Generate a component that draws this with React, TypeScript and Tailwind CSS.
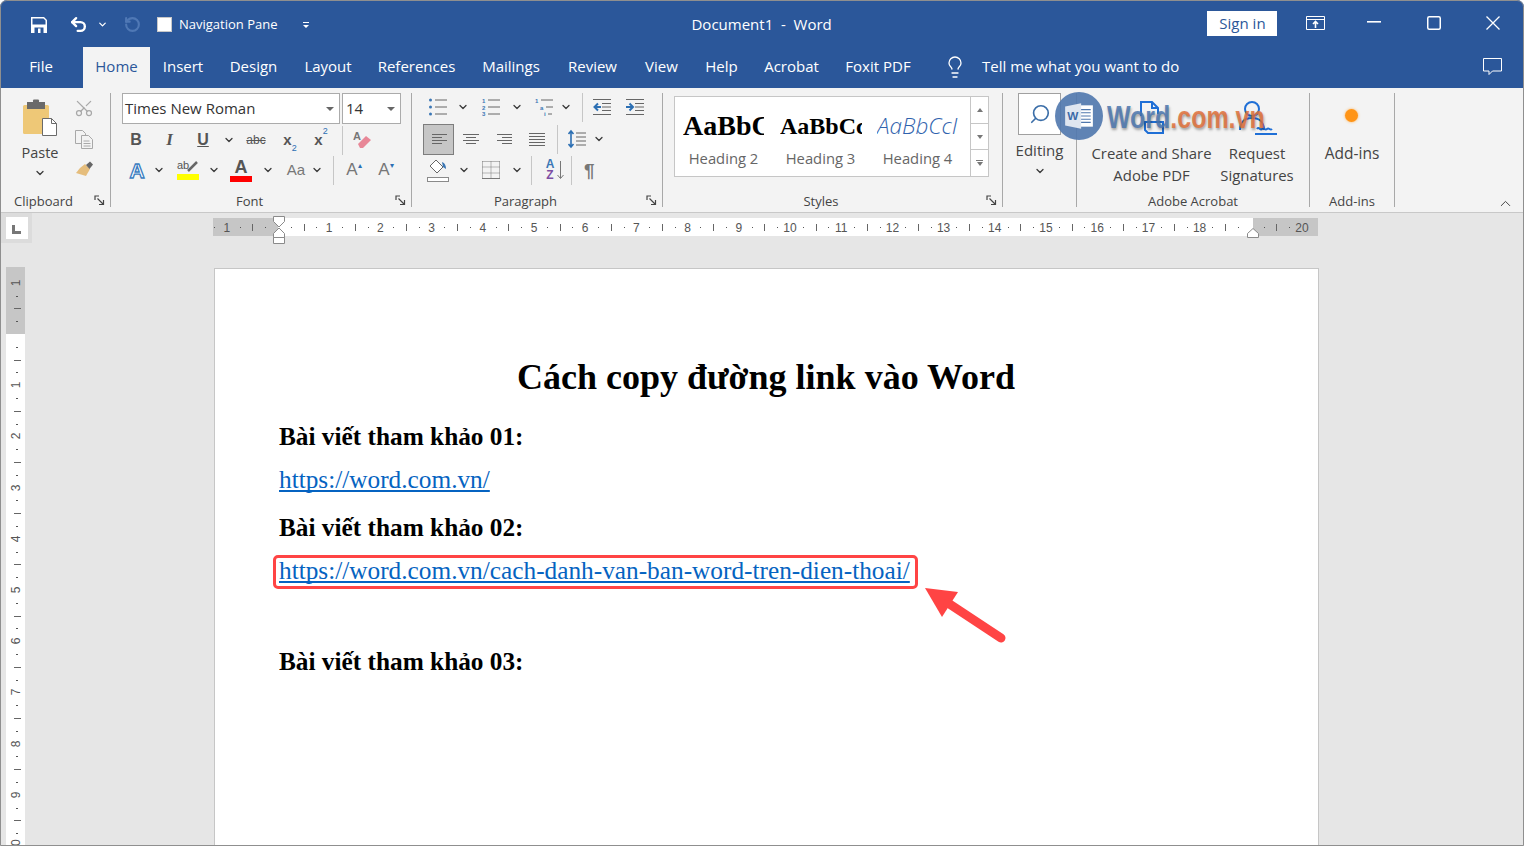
import { ChevronDown, ChevronUp, Lightbulb, Search, Scissors, Undo2, RotateCcw } from "lucide-react";

const SANS = "font-['Open_Sans','Noto_Sans',sans-serif]";
const SERIF = "font-['Liberation_Serif',serif]";
const ARIAL = "font-['Liberation_Sans',sans-serif]";

const TABS = [
  { label: "Insert", width: 66 },
  { label: "Design", width: 75 },
  { label: "Layout", width: 74 },
  { label: "References", width: 103 },
  { label: "Mailings", width: 86 },
  { label: "Review", width: 77 },
  { label: "View", width: 61 },
  { label: "Help", width: 59 },
  { label: "Acrobat", width: 81 },
  { label: "Foxit PDF", width: 92 },
];

function Launcher() {
  return (
    <svg width="11" height="11" viewBox="0 0 11 11" className="absolute right-[5px] bottom-[1px] text-[#444]" fill="none" stroke="currentColor">
      <path d="M1 5V1h4M3.5 3.500L9.500 9.500M9.500 5v4.500H5" strokeWidth="1.200" />
    </svg>
  );
}

function Caret({ className = "" }: { className?: string }) {
  return <ChevronDown size={12} strokeWidth={2.6} className={`shrink-0 text-[#3a3a3a] ${className}`} />;
}

function Sep({ className = "" }: { className?: string }) {
  return <div className={`h-[29px] w-px shrink-0 bg-[#c6c6c6] ${className}`} />;
}

function Group({ label, width, children, launcher }: { label: string; width: number; children: React.ReactNode; launcher?: boolean }) {
  return (
    <div className="relative h-[114px] shrink-0 border-r border-[#a8a8a8]" style={{ width }}>
      <div className="h-[99px]">{children}</div>
      <div className={`text-center text-[13px] leading-[18px] text-[#444] ${launcher ? "pr-[23px]" : ""}`}>{label}</div>
      {launcher && <Launcher />}
    </div>
  );
}

function Lines({ kind }: { kind: "left" | "center" | "right" | "justify" }) {
  const rows = kind === "justify" ? ["M0 1.500h16", "M0 4.500h16", "M0 7.500h16", "M0 10.500h16", "M0 13.500h16"] :
    kind === "left" ? ["M1 2.500h15", "M1 5.500h10", "M1 8.500h15", "M1 11.500h10"] :
    kind === "center" ? ["M0 2.500h16", "M3 5.500h10", "M0 8.500h16", "M3 11.500h10"] :
    ["M1 2.500h15", "M6 5.500h10", "M1 8.500h15", "M6 11.500h10"];
  return (
    <svg width="16" height="15" viewBox="0 0 16 15" stroke="#666" fill="none" className="shrink-0">
      {rows.map((d) => <path key={d} d={d} />)}
    </svg>
  );
}

function ClipboardIcon() {
  return (
    <svg width="36" height="40" viewBox="0 0 36 40">
      <rect x="1" y="6" width="26" height="29" rx="1.500" fill="#eec877" />
      <rect x="5" y="3" width="18" height="7" fill="#6a6a6a" />
      <rect x="11" y="0.500" width="6" height="5" rx="1" fill="#6a6a6a" />
      <path d="M20.500 19.500h9l5 5v12h-14z" fill="#fff" stroke="#6a6a6a" />
      <path d="M29.500 19.500v5h5" fill="none" stroke="#6a6a6a" />
    </svg>
  );
}

function ListIcon({ kind }: { kind: "bullet" | "number" | "multi" }) {
  return (
    <svg width="18" height="18" viewBox="0 0 18 18" fill="none" className="shrink-0">
      {kind === "bullet" && (
        <>
          <circle cx="1.500" cy="2" r="1.500" fill="#3b77b5" />
          <circle cx="1.500" cy="9" r="1.500" fill="#3b77b5" />
          <circle cx="1.500" cy="16" r="1.500" fill="#3b77b5" />
        </>
      )}
      {kind === "number" && (
        <g fontSize="6" fontWeight="700" fill="#3b77b5" fontFamily="Liberation Sans">
          <text x="0" y="4.500">1</text>
          <text x="0" y="11.500">2</text>
          <text x="0" y="18">3</text>
        </g>
      )}
      {kind === "multi" && (
        <g fontSize="6" fontWeight="700" fill="#3b77b5" fontFamily="Liberation Sans">
          <text x="0" y="4.500">1</text>
          <text x="5" y="11.500">a</text>
          <text x="9" y="18">i</text>
        </g>
      )}
      <path d={kind === "multi" ? "M6 2h12M11 9h7M13 16h4" : "M6 2h12M6 9h12M6 16h12"} stroke="#666" />
    </svg>
  );
}

function IndentIcon({ dir }: { dir: "in" | "out" }) {
  return (
    <svg width="18" height="18" viewBox="0 0 18 18" fill="none" className="shrink-0">
      <path d="M0 1.500h18M9 5.500h9M9 9h9M9 12.500h9M0 16.500h18" stroke="#666" />
      <path d={dir === "out" ? "M8 9H2M5 5.500L1.500 9 5 12.500" : "M0 9h6M3.500 5.500L7 9l-3.500 3.500"} stroke="#2c6fb3" strokeWidth="2" />
    </svg>
  );
}

// horizontal ruler: 0 sits at x=278 on the page, one unit is 51.2px
function HRuler() {
  const marks = [];
  for (let i = -1; i <= 20; i++) {
    const x = 65 + i * 51.2;
    if (i !== 0 && i !== 19) {
      marks.push(
        <span key={`n${i}`} className={`absolute top-0 w-6 -translate-x-1/2 text-center ${ARIAL} text-[12px] leading-[20px] text-[#555]`} style={{ left: x }}>
          {Math.abs(i)}
        </span>
      );
    }
    if (i < 20) {
      [12.8, 38.4].forEach((d) => {
        const lx = x + d;
        if (lx > 0 && lx < 1105) marks.push(<span key={`d${i}${d}`} className="absolute top-[9px] h-[1px] w-[1px] bg-[#555]" style={{ left: lx }} />);
      });
      const tx = x + 25.6;
      if (tx > 0 && tx < 1105) marks.push(<span key={`t${i}`} className="absolute top-[6px] h-[7px] w-[1px] bg-[#666]" style={{ left: tx }} />);
    }
    if (i === -1) marks.push(<span key="edge" className="absolute left-[1px] top-[9px] h-[1px] w-[1px] bg-[#555]" />);
  }
  return (
    <div className="relative h-[18px] w-[1105px] overflow-hidden bg-white">
      <div className="absolute left-0 top-0 h-full w-[65px] bg-[#c6c6c6]" />
      <div className="absolute right-0 top-0 h-full w-[65px] bg-[#c6c6c6]" />
      {marks}
    </div>
  );
}

// vertical ruler: 0 sits at y=334, same unit
function VRuler() {
  const marks = [];
  for (let i = -1; i <= 10; i++) {
    const y = 67 + i * 51.2;
    if (i !== 0) {
      marks.push(
        <span key={`n${i}`} className={`absolute left-0 h-4 w-[19px] -translate-y-1/2 -rotate-90 text-center ${ARIAL} text-[12px] leading-[16px] text-[#555]`} style={{ top: y }}>
          {Math.abs(i)}
        </span>
      );
    }
    [12.8, 38.4].forEach((d) => {
      const ly = y + d;
      if (ly > 0) marks.push(<span key={`d${i}${d}`} className="absolute left-[10px] h-[1px] w-[2px] bg-[#555]" style={{ top: ly }} />);
    });
    const ty = y + 25.6;
    if (ty > 0) marks.push(<span key={`t${i}`} className="absolute left-[8px] h-[1px] w-[7px] bg-[#666]" style={{ top: ty }} />);
  }
  return (
    <div className="relative h-full w-[19px] overflow-hidden bg-white">
      <div className="absolute left-0 top-0 h-[67px] w-full bg-[#c6c6c6]" />
      {marks}
    </div>
  );
}

function Watermark() {
  return (
    <div className="pointer-events-none absolute left-[1055px] top-[92px] flex items-center">
      <div className="flex h-[48px] w-[48px] items-center justify-center rounded-full bg-[#4f77ad]/90">
        <svg width="32" height="32" viewBox="0 0 30 30">
          <rect x="13" y="5" width="15" height="20" fill="#fff" />
          <path d="M16 9h10M16 12h10M16 15h10M16 18h10M16 21h10" stroke="#4f77ad" />
          <path d="M2 6l15-3v24L2 24z" fill="#dfe6f0" />
          <text x="4" y="19" fontSize="11" fontWeight="700" fill="#3c6aa8" fontFamily="Liberation Sans">W</text>
        </svg>
      </div>
      <div className={`ml-[4px] mt-[1px] origin-left scale-x-[0.78] whitespace-nowrap ${ARIAL} text-[32px] font-bold leading-none [text-shadow:1px_2px_3px_rgba(0,0,0,0.35)]`}>
        <span className="text-[#4c76ae]/85">Word</span>
        <span className="text-[#e0703a]/85">.com.vn</span>
      </div>
    </div>
  );
}

export default function App() {
  return (
    <div className={`relative h-[846px] w-[1524px] overflow-hidden rounded-t-[7px] bg-[#e6e6e6] ${SANS}`}>
      {/* Title bar */}
      <div className="flex h-[47px] items-center bg-[#2b579a] pl-[31px] pt-[2px] text-white">
        <svg width="16" height="16" viewBox="0 0 16 16" className="shrink-0">
          <path fillRule="evenodd" fill="#fff" d="M0 0h13l3 3v13H0zM1.500 1.500v6h13v-4l-2-2zM3.500 10.500v5.500h9v-5.500z" />
          <rect x="7" y="11.500" width="2.500" height="4.500" fill="#fff" />
        </svg>
        <Undo2 size={19} strokeWidth={3} className="ml-[22px] shrink-0" />
        <ChevronDown size={11} strokeWidth={2.8} className="ml-[9px] shrink-0" />
        <RotateCcw size={17} strokeWidth={3} className="ml-[16px] shrink-0 text-[#4f78b5]" />
        <div className="ml-[16px] h-[15px] w-[15px] shrink-0 border border-[#c8c8c8] bg-white" />
        <span className="ml-[7px] text-[13px]">Navigation Pane</span>
        <svg width="8" height="8" viewBox="0 0 8 8" className="ml-[25px] shrink-0" fill="#fff"><path d="M1 1h6v1H1zM1 4h6L4 7z" /></svg>
        <div className="ml-[381px] w-[260px] whitespace-nowrap text-[15px]">Document1&nbsp; -&nbsp; Word</div>
        <div className="mb-[3px] ml-[256px] flex h-[25px] w-[70px] shrink-0 items-center justify-center bg-white text-[15px] text-[#2b579a]">Sign in</div>
        <svg width="19" height="15" viewBox="0 0 19 15" fill="none" stroke="#fff" className="mb-[3px] ml-[29px] shrink-0">
          <path d="M.500.500h18v13H.500zM.500 3.500h18" />
          <path d="M9.500 12V6M7 8l2.500-2.500L12 8" strokeWidth="1.600" />
        </svg>
        <svg width="14" height="2" viewBox="0 0 14 2" className="mb-[6px] ml-[42px] shrink-0"><rect width="14" height="1.600" fill="#fff" /></svg>
        <svg width="14" height="14" viewBox="0 0 14 14" fill="none" stroke="#fff" strokeWidth="1.500" className="mb-[3px] ml-[46px] shrink-0"><rect x=".75" y=".75" width="12.500" height="12.500" rx="1.500" /></svg>
        <svg width="14" height="14" viewBox="0 0 14 14" fill="none" stroke="#fff" strokeWidth="1.300" className="mb-[3px] ml-[45px] shrink-0"><path d="M.500.500l13 13M13.500.500l-13 13" /></svg>
      </div>

      {/* Tabs */}
      <div className="flex h-[41px] items-center bg-[#2b579a] text-[15px] text-white">
        <div className="flex h-[41px] w-[83px] items-center justify-center pb-[2px] pr-[1px]">File</div>
        <div className="flex h-[41px] w-[67px] items-center justify-center bg-[#f3f3f3] pb-[2px] text-[#2b579a]">Home</div>
        {TABS.map((t) => (
          <div key={t.label} className="flex h-[41px] items-center justify-center whitespace-nowrap pb-[2px]" style={{ width: t.width }}>{t.label}</div>
        ))}
        <Lightbulb size={24} strokeWidth={1.3} className="mb-[2px] ml-[19px] shrink-0" />
        <div className="ml-[15px] flex h-[41px] items-center pb-[2px]">Tell me what you want to do</div>
        <svg width="19" height="18" viewBox="0 0 19 18" fill="none" stroke="#fff" className="mb-[2px] ml-auto mr-[22px] shrink-0">
          <path d="M.500.500h18v12.500H9.500L6 16.500V13H.500z" />
        </svg>
      </div>

      {/* Ribbon */}
      <div className="relative flex h-[125px] items-start border-b border-[#c8c8c8] bg-[#f3f3f3] pt-[5px] text-[#444]">
        <Group label="Clipboard" width={111} launcher>
          <div className="flex">
            <div className="flex w-[70px] flex-col items-center pl-[10px]">
              <div className="mt-[6px]"><ClipboardIcon /></div>
              <div className="mt-[4px] text-[14.500px] leading-[20px]">Paste</div>
              <Caret className="mt-[4px]" />
            </div>
            <div className="ml-[4px] flex flex-col items-center gap-[12px] pt-[5px] text-[#a8a8a8]">
              <Scissors size={20} strokeWidth={1.5} className="-rotate-90" />
              <svg width="18" height="19" viewBox="0 0 18 19" fill="none" stroke="#a8a8a8">
                <path d="M.500.500h7l3 3v10H.500z" fill="#f3f3f3" />
                <path d="M6.500 5.500h7l4 4v9h-11z" fill="#f3f3f3" />
                <path d="M8.500 11h6M8.500 13.500h7M8.500 16h7" />
              </svg>
              <svg width="19" height="17" viewBox="0 0 19 17">
                <path d="M10 3L15 8 11 15 1 12 5 7z" fill="#e5bd7c" />
                <path d="M11 4l4-3.500 3 3-3.500 4.500z" fill="#666" />
              </svg>
            </div>
          </div>
        </Group>

        <Group label="Font" width={301} launcher>
          <div className="flex gap-[2px] pl-[11px]">
            <div className="flex h-[31px] w-[218px] items-center justify-between border border-[#ababab] bg-white pl-[2px] pr-[5px] text-[15px] text-[#333]">
              Times New Roman
              <span className="h-0 w-0 border-x-[4px] border-t-[4px] border-x-transparent border-t-[#666]" />
            </div>
            <div className="flex h-[31px] w-[59px] items-center justify-between border border-[#ababab] bg-white pl-[3px] pr-[5px] text-[15px] text-[#333]">
              14
              <span className="h-0 w-0 border-x-[4px] border-t-[4px] border-x-transparent border-t-[#666]" />
            </div>
          </div>
          <div className={`mt-[1px] flex h-[30px] items-center pl-[9px] ${ARIAL} text-[#555]`}>
            <span className="w-[32px] text-center text-[16px] font-bold">B</span>
            <span className={`w-[35px] text-center ${SERIF} text-[17px] font-bold italic`}>I</span>
            <span className="w-[32px] text-center text-[16px] font-bold underline">U</span>
            <span className="flex w-[20px] justify-center"><Caret /></span>
            <span className="w-[34px] text-center text-[12px] line-through">abc</span>
            <span className="w-[32px] pl-[2px] text-center text-[15px] font-bold">x<sub className="align-sub text-[9px] font-normal text-[#2c6fb3]">2</sub></span>
            <span className="w-[32px] text-center text-[15px] font-bold">x<sup className="align-super text-[9px] font-normal text-[#2c6fb3]">2</sup></span>
            <Sep className="ml-[5px]" />
            <svg width="20" height="20" viewBox="0 0 20 20" className="ml-[10px] shrink-0">
              <text x="0" y="10" fontSize="11" fontWeight="700" fill="#777" fontFamily="Liberation Sans">A</text>
              <path d="M5 14l8-8 5 4-8 8h-3z" fill="#e88797" />
            </svg>
          </div>
          <div className={`flex h-[30px] items-center pl-[13px] ${ARIAL} text-[#555]`}>
            <span className="w-[26px] text-center text-[21px] font-bold leading-none text-white [-webkit-text-stroke:1.3px_#3a7cc0]">A</span>
            <span className="flex w-[18px] justify-center"><Caret /></span>
            <div className="relative ml-[9px] flex w-[22px] flex-col items-start">
              <span className="text-[11px] leading-[11px]">ab</span>
              <svg width="12" height="12" viewBox="0 0 12 12" className="absolute right-0 top-0"><path d="M1 11L10 2" stroke="#666" strokeWidth="2.500" /></svg>
              <span className="mt-[3px] h-[6px] w-full bg-[#ffff00]" />
            </div>
            <span className="ml-[9px] flex w-[12px] justify-center"><Caret /></span>
            <div className="ml-[10px] flex w-[22px] flex-col items-center">
              <span className="text-[18px] font-bold leading-[16px]">A</span>
              <span className="mt-[1px] h-[6px] w-full bg-[#ff0000]" />
            </div>
            <span className="ml-[10px] flex w-[12px] justify-center"><Caret /></span>
            <span className="ml-[6px] w-[32px] text-center text-[15px] text-[#777]">Aa</span>
            <span className="flex w-[10px] justify-center"><Caret /></span>
            <Sep className="ml-[11px]" />
            <span className="ml-[4px] w-[32px] text-center text-[17px] text-[#777]">A<span className="align-super text-[8px] text-[#2c6fb3]">▴</span></span>
            <span className="w-[32px] text-center text-[17px] text-[#777]">A<span className="align-super text-[8px] text-[#2c6fb3]">▾</span></span>
          </div>
        </Group>

        <Group label="Paragraph" width={251} launcher>
          <div className="flex h-[28px] items-center pl-[17px]">
            <ListIcon kind="bullet" />
            <Caret className="ml-[10px]" />
            <div className="ml-[13px]"><ListIcon kind="number" /></div>
            <Caret className="ml-[11px]" />
            <div className="ml-[12px]"><ListIcon kind="multi" /></div>
            <Caret className="ml-[7px]" />
            <Sep className="ml-[10px]" />
            <div className="ml-[10px]"><IndentIcon dir="out" /></div>
            <div className="ml-[15px]"><IndentIcon dir="in" /></div>
          </div>
          <div className="flex h-[36px] items-center pl-[11px]">
            <div className="flex h-[31px] w-[31px] shrink-0 items-center justify-center border border-[#7d7d7d] bg-[#c6c6c6]"><Lines kind="left" /></div>
            <div className="ml-[9px]"><Lines kind="center" /></div>
            <div className="ml-[17px]"><Lines kind="right" /></div>
            <div className="ml-[17px]"><Lines kind="justify" /></div>
            <Sep className="ml-[12px]" />
            <svg width="18" height="20" viewBox="0 0 18 20" fill="none" className="ml-[10px] shrink-0">
              <path d="M3 2v16M.500 5L3 2l2.500 3M.500 15L3 18l2.500-3" stroke="#2c6fb3" strokeWidth="1.600" />
              <path d="M8 4h10M8 8h10M8 12h10M8 16h10" stroke="#666" />
            </svg>
            <Caret className="ml-[7px]" />
          </div>
          <div className="flex h-[26px] items-center pl-[15px]">
            <svg width="22" height="24" viewBox="0 0 22 24" fill="none" className="shrink-0">
              <path d="M9 2l7 7-6 6-7-7z" fill="#fff" stroke="#666" />
              <path d="M15 4c3 1 4 4 4 7l-3-2z" fill="#3b77b5" />
              <rect x=".500" y="19.500" width="21" height="4" fill="#fff" stroke="#8a8a8a" />
            </svg>
            <Caret className="ml-[9px]" />
            <svg width="18" height="18" viewBox="0 0 18 18" fill="none" stroke="#777" className="ml-[12px] shrink-0">
              <path d="M.500.500h17M.500 6h17M.500 12h17" strokeDasharray="1 1" />
              <path d="M.500.500v17M9 .500v17M17.500.500v17" strokeDasharray="1 1" />
              <path d="M0 17.500h18" />
            </svg>
            <Caret className="ml-[11px]" />
            <Sep className="ml-[8px]" />
            <div className={`ml-[11px] flex w-[14px] shrink-0 flex-col items-center ${ARIAL} text-[12px] font-bold leading-[11px]`}>
              <span className="text-[#3b77b5]">A</span>
              <span className="text-[#7d4ea3]">Z</span>
            </div>
            <svg width="7" height="20" viewBox="0 0 7 20" fill="none" stroke="#777" className="shrink-0"><path d="M3.500 1v17M.500 15l3 3.500 3-3.500" /></svg>
            <Sep className="ml-[7px]" />
            <span className={`ml-[12px] ${ARIAL} text-[19px] font-bold leading-none text-[#777]`}>¶</span>
          </div>
        </Group>

        <Group label="Styles" width={340} launcher>
          <div className="pl-[11px] pt-[3px]">
            <div className="flex h-[81px] w-[315px] border border-[#c6c6c6] bg-white">
              <div className="flex w-[295px] pt-[11px]">
                <div className="w-[97px] text-center">
                  <div className={`${SERIF} ml-[8px] h-[39px] w-[81px] overflow-hidden whitespace-nowrap text-left text-[28px] font-bold leading-[36px] text-black`}>AaBbC</div>
                  <div className="text-[14.800px] leading-[22px] text-[#666]">Heading 2</div>
                </div>
                <div className="w-[97px] text-center">
                  <div className={`${SERIF} ml-[8px] h-[39px] w-[82px] overflow-hidden whitespace-nowrap text-left text-[24px] font-bold leading-[36px] text-black`}>AaBbCc</div>
                  <div className="text-[14.800px] leading-[22px] text-[#666]">Heading 3</div>
                </div>
                <div className="w-[97px] text-center">
                  <div className="ml-[8px] h-[39px] w-[82px] overflow-hidden whitespace-nowrap text-left text-[22.500px] font-light italic leading-[36px] text-[#2f62ad]">AaBbCcI</div>
                  <div className="text-[14.800px] leading-[22px] text-[#666]">Heading 4</div>
                </div>
              </div>
              <div className="flex w-[18px] flex-col border-l border-[#c6c6c6]">
                <div className="flex h-[27px] items-center justify-center border-b border-[#c6c6c6]"><span className="h-0 w-0 border-x-[3px] border-b-[4px] border-x-transparent border-b-[#777]" /></div>
                <div className="flex h-[26px] items-center justify-center border-b border-[#c6c6c6]"><span className="h-0 w-0 border-x-[3px] border-t-[4px] border-x-transparent border-t-[#777]" /></div>
                <div className="flex flex-1 flex-col items-center justify-center gap-[1px]"><span className="h-px w-[7px] bg-[#777]" /><span className="h-0 w-0 border-x-[3px] border-t-[4px] border-x-transparent border-t-[#777]" /></div>
              </div>
            </div>
          </div>
        </Group>

        <Group label="" width={74}>
          <div className="ml-[15px] flex h-[42px] w-[43px] items-center justify-center border border-[#a0a0a0] bg-white">
            <Search size={22} strokeWidth={1.8} className="-scale-x-100 text-[#3b6ea8]" />
          </div>
          <div className="mt-[3px] text-center text-[15px] leading-[24px]">Editing</div>
          <div className="mt-[3px] flex justify-center"><Caret /></div>
        </Group>

        <Group label="Adobe Acrobat" width={233}>
          <div className="flex pt-[7px]">
            <div className="w-[149px] shrink-0 text-center">
              <svg width="32" height="34" viewBox="0 0 32 34" fill="none" stroke="#1f6fd6" strokeWidth="2" className="mx-auto">
                <path d="M5 16V2h11l6 6v6M9 22H27v11H12l-3-3z" />
                <path d="M16 2v6h6" />
              </svg>
              <div className="mt-[8px] whitespace-nowrap text-[14.900px] leading-[22px]">Create and Share<br />Adobe PDF</div>
            </div>
            <div className="-ml-[11px] w-[84px] shrink-0 text-center">
              <svg width="44" height="35" viewBox="0 0 44 35" fill="none" stroke="#1f6fd6" strokeWidth="2" className="mx-auto">
                <circle cx="17" cy="9" r="7" />
                <path d="M5 30c0-8 5-12 12-12s12 4 12 12" />
                <path d="M20 34h22M22 29c2-3 3 2 5 0s3 2 5 0 3 2 5 0" />
              </svg>
              <div className="mt-[7px] whitespace-nowrap text-[14.900px] leading-[22px]">Request<br />Signatures</div>
            </div>
          </div>
        </Group>

        <Group label="Add-ins" width={85}>
          <div className="flex flex-col items-center pt-[16px]">
            <div className="-ml-[2px] h-[13px] w-[13px] rounded-full bg-[#ff9416] shadow-[0_0_3px_#ffb35a]" />
            <div className="mt-[20px] text-[15.500px] leading-[22px]">Add-ins</div>
          </div>
        </Group>

        <ChevronUp size={17} strokeWidth={1.4} className="absolute bottom-[0px] right-[10px]" />
      </div>

      {/* Ruler row */}
      <div className="flex h-[54px]">
        <div className="ml-[1px] flex h-[30px] w-[31px] items-center justify-center bg-[#dcdcdc]">
          <div className="flex h-[22px] w-[22px] items-end bg-white pb-[5px] pl-[6px]">
            <div className="h-[9px] w-[9px] border-b-[3px] border-l-[3px] border-[#777]" />
          </div>
        </div>
        <div className="relative ml-[181px] mt-[5px] h-[18px]">
          <HRuler />
          <svg width="12" height="30" viewBox="0 0 12 30" className="absolute left-[60px] -top-[2px]" fill="#fff" stroke="#8a8a8a">
            <path d="M.500.500h11v5L6 11 .500 5.500z" />
            <path d="M6 12l5.500 5.500v4h-11v-4zM.500 21.500h11v6h-11z" />
          </svg>
          <svg width="12" height="10" viewBox="0 0 12 10" className="absolute left-[1034px] top-[10px]" fill="#fff" stroke="#8a8a8a">
            <path d="M6 .500l5.500 5v4h-11v-4z" />
          </svg>
        </div>
      </div>

      {/* Document area */}
      <div className="flex h-[580px]">
        <div className="ml-[6px] w-[19px] shrink-0"><VRuler /></div>
        <div className={`ml-[189px] mt-[1px] h-[600px] w-[1105px] border border-[#c6c6c6] bg-white pl-[64px] pr-[65px] pt-[85px] ${SERIF} text-black`}>
          <div className="h-[46px] text-center text-[36px] font-bold leading-[46px]">Cách copy đường link vào Word</div>
          <div className="mt-[21px] whitespace-nowrap text-[25.300px] font-bold leading-[30px]">Bài viết tham khảo 01:</div>
          <div className="mt-[13px] whitespace-nowrap text-[25.300px] leading-[30px] text-[#0563c1] underline [text-decoration-skip-ink:none]">https://word.com.vn/</div>
          <div className="mt-[18px] whitespace-nowrap text-[25.300px] font-bold leading-[30px]">Bài viết tham khảo 02:</div>
          <div className="relative mt-[13px] whitespace-nowrap text-[25.300px] leading-[30px] text-[#0563c1] underline [text-decoration-skip-ink:none]">
            https://word.com.vn/cach-danh-van-ban-word-tren-dien-thoai/
            <div className="absolute -left-[6px] top-0 h-[34px] w-[645px] rounded-[5px] border-[3px] border-[#ff4444]" />
          </div>
          <div className="mt-[61px] whitespace-nowrap text-[25.300px] font-bold leading-[30px]">Bài viết tham khảo 03:</div>
        </div>
      </div>

      <Watermark />

      {/* Red arrow over the link */}
      <svg width="90" height="65" viewBox="0 0 90 65" className="absolute left-[920px] top-[583px]" fill="#ff4444">
        <path d="M5 5l33 4-16 25z" />
        <path d="M28 20L81 55" stroke="#ff4444" strokeWidth="9" strokeLinecap="round" />
      </svg>

      {/* Window outline */}
      <div className="pointer-events-none absolute inset-0 rounded-t-[7px] border border-[#8f8f8f]" />
    </div>
  );
}
